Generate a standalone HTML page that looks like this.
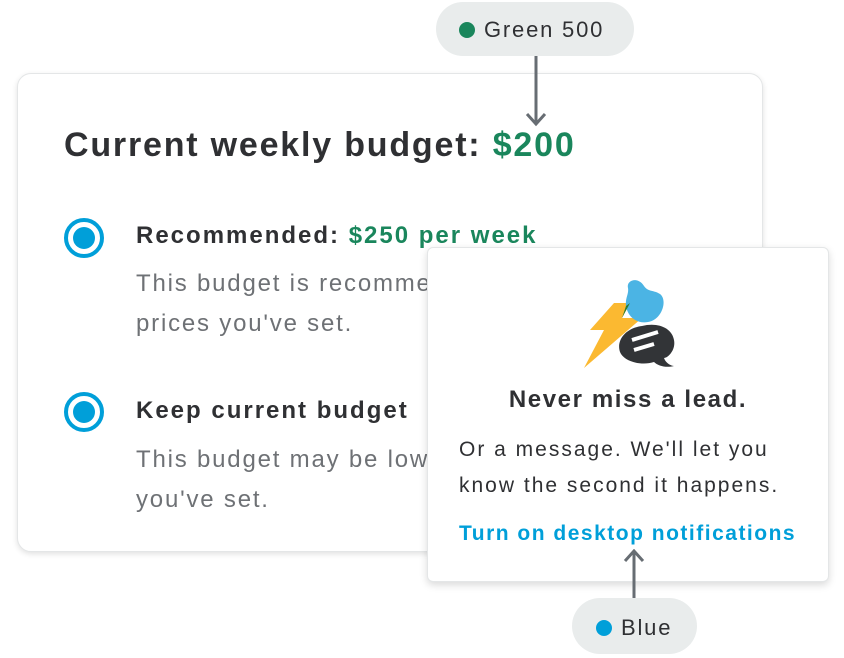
<!DOCTYPE html>
<html><head><meta charset="utf-8"><style>
*{margin:0;padding:0;box-sizing:border-box}
body{width:844px;height:654px;background:#fff;position:relative;overflow:hidden;font-family:"Liberation Sans",sans-serif;color:#2f3033}
.abs{position:absolute;white-space:nowrap}
.card{position:absolute;left:17px;top:73px;width:746px;height:479px;border:1px solid #e4e6e7;border-radius:14px;background:#fff;box-shadow:0 2px 6px rgba(0,0,0,.12);overflow:hidden}
.pop{position:absolute;left:427px;top:247px;width:402px;height:335px;border:1px solid #e4e6e7;border-radius:6px;background:#fff;box-shadow:0 3px 8px rgba(0,0,0,.15)}
.pill{position:absolute;background:#e9ecec;border-radius:28px;font-size:22px;color:#2f3033;letter-spacing:1.8px}
.dot{display:inline-block;width:16px;height:16px;border-radius:50%;vertical-align:-1px;margin-right:9px}
.radio{position:absolute;width:40px;height:40px;border-radius:50%;border:4px solid #009fd9;background:#fff}
.radio:after{content:"";position:absolute;left:5px;top:5px;width:22px;height:22px;border-radius:50%;background:#009fd9}
.g{color:#1a865c}
.lbl{font-size:24px;font-weight:bold;letter-spacing:2px}
.body{font-size:24px;color:#6e7175;line-height:40px;letter-spacing:1.8px}
</style></head><body>
<div class="card">
  <div class="abs" style="left:46px;top:52px;font-size:34px;font-weight:bold;letter-spacing:1.8px">Current weekly budget: <span class="g">$200</span></div>
  <div class="radio" style="left:46px;top:144px"></div>
  <div class="abs lbl" style="left:118px;top:148px">Recommended: <span class="g">$250 per week</span></div>
  <div class="abs body" style="left:118px;top:190px">This budget is recommended based on the<br>prices you've set.</div>
  <div class="radio" style="left:46px;top:318px"></div>
  <div class="abs lbl" style="left:118px;top:323px">Keep current budget</div>
  <div class="abs body" style="left:118px;top:366px">This budget may be lower than the prices<br>you've set.</div>
</div>
<div class="pill" style="left:436px;top:2px;width:198px;height:54px;line-height:56px;padding-left:23px"><span class="dot" style="background:#1a865c"></span>Green 500</div>
<svg class="abs" style="left:524px;top:56px" width="24" height="72"><path d="M12 0V68M3 58L12 68L21 58" stroke="#676d73" stroke-width="3" fill="none"/></svg>
<div class="pop">
  <svg class="abs" style="left:154px;top:30px" width="96" height="92" viewBox="0 0 96 92">
    <path d="M32 25H48L40 40H60L2 90L22 52H8Z" fill="#fbb931"/>
    <path d="M46 10C44 2 56 -2 62 8C66 14 72 12 78 16C86 22 80 42 66 44C56 46 46 40 44 28C43 20 47 16 46 10Z" fill="#4bb4e4"/>
    <path d="M44 28L40 40L48 25Z" fill="#2e7d32"/>
    <path d="M60 48C76 44 90 50 92 62C94 72 86 80 82 80C84 86 90 88 92 88C84 90 76 88 72 84C60 88 42 84 38 74C34 62 44 50 60 48Z" fill="#323437"/>
    <path d="M50 62L76 54M52 72L72 66" stroke="#fff" stroke-width="4"/>
  </svg>
  <div class="abs" style="left:0;width:400px;text-align:center;top:138px;font-size:24px;font-weight:bold;letter-spacing:1.6px">Never miss a lead.</div>
  <div class="abs" style="left:31px;top:184px;font-size:21px;line-height:36px;color:#2f3033;letter-spacing:2px">Or a message. We'll let you<br>know the second it happens.</div>
  <div class="abs" style="left:31px;top:274px;font-size:21px;font-weight:bold;color:#009fd9;letter-spacing:1.5px">Turn on desktop notifications</div>
</div>
<svg class="abs" style="left:622px;top:549px" width="24" height="50"><path d="M12 50V2M3 12L12 2L21 12" stroke="#676d73" stroke-width="3" fill="none"/></svg>
<div class="pill" style="left:572px;top:598px;width:125px;height:56px;line-height:60px;padding-left:24px"><span class="dot" style="background:#009fd9"></span>Blue</div>
</body></html>
